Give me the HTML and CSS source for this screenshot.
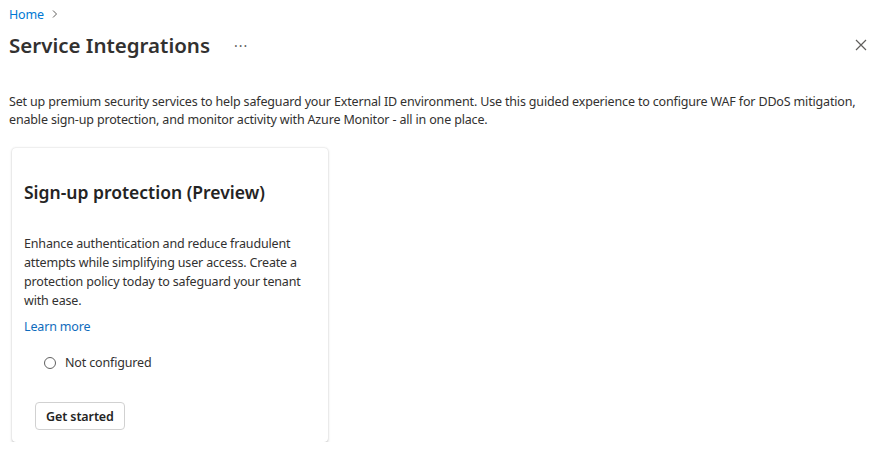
FILE: index.html
```html
<!DOCTYPE html>
<html lang="en">
<head>
<meta charset="utf-8">
<title>Service Integrations</title>
<link rel="stylesheet" href="styles.css">
</head>
<body>
<div class="page">
  <nav class="breadcrumb"><a href="#" class="crumb">Home</a><svg class="chev" width="8" height="10" viewBox="0 0 8 10"><path d="M2 1.5 L5.5 5 L2 8.5" fill="none" stroke="#605e5c" stroke-width="1"/></svg></nav>
  <header class="header">
    <h1 class="title">Service Integrations</h1>
    <span class="more">···</span>
    <span class="spacer"></span>
    <svg class="close" width="12" height="12" viewBox="0 0 12 12"><path d="M1 1 L11 11 M11 1 L1 11" stroke="#605e5c" stroke-width="1.2"/></svg>
  </header>
  <p class="intro">Set up premium security services to help safeguard your External ID environment. Use this guided experience to configure WAF for DDoS mitigation, enable sign-up protection, and monitor activity with Azure Monitor - all in one place.</p>
  <section class="card">
    <h2 class="card-title">Sign-up protection (Preview)</h2>
    <p class="card-desc">Enhance authentication and reduce fraudulent attempts while simplifying user access. Create a protection policy today to safeguard your tenant with ease.</p>
    <a href="#" class="learn">Learn more</a>
    <div class="status"><span class="radio"></span><span>Not configured</span></div>
    <button class="btn">Get started</button>
  </section>
</div>
</body>
</html>
```
FILE: styles.css
```css
* { box-sizing: border-box; }
html, body { margin: 0; padding: 0; background: #fff; }
body {
  font-family: "Noto Sans", "Open Sans", sans-serif;
  font-size: 12.5px;
  letter-spacing: -0.16px;
  color: #323130;
}
.page { padding: 4px 9px 0 9px; }
.breadcrumb { display: flex; align-items: center; gap: 7px; height: 20px; }
.crumb { color: #0078d4; text-decoration: none; }
.header { display: flex; align-items: center; height: 40px; margin-top: 1px; }
.title { margin: 0; font-size: 20.5px; font-weight: 600; color: #323130; letter-spacing: 0; }
.more { margin-left: 24px; color: #605e5c; font-size: 14px; letter-spacing: 1px; }
.spacer { flex: 1; }
.close { margin-right: 12px; }
.intro { margin: 28px 0 0 0; line-height: 18px; width: 862px; }
.card {
  margin: 19px 0 0 3px;
  width: 316px;
  background: #fff;
  border-radius: 4px;
  box-shadow: 0 0.5px 2px rgba(0,0,0,0.18), 0 1.6px 3.6px rgba(0,0,0,0.1);
  padding: 32px 12px 12px 12px;
}
.card-title { margin: 0; font-size: 17.5px; font-weight: 600; line-height: 24px; color: #242424; letter-spacing: 0; }
.card-desc { margin: 30px 0 0 0; line-height: 19px; }
.learn { display: block; margin-top: 7px; color: #0f6cbd; text-decoration: none; line-height: 19px; }
.status { display: flex; align-items: center; gap: 9px; margin: 17px 0 0 20px; line-height: 20px; }
.radio { width: 12px; height: 12px; border: 1px solid #616161; border-radius: 50%; }
.btn {
  display: block;
  margin: 29px 0 0 11px;
  height: 28px;
  padding: 0 10px;
  font-family: inherit;
  font-size: 12.5px;
  letter-spacing: -0.1px;
  font-weight: 600;
  color: #242424;
  background: #fff;
  border: 1px solid #d1d1d1;
  border-radius: 4px;
}
```
